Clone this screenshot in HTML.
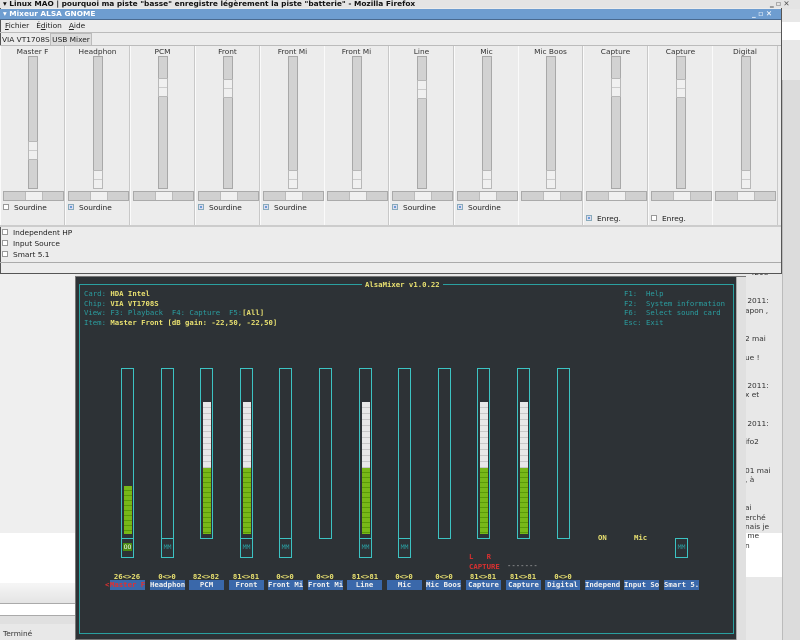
<!DOCTYPE html>
<html><head><meta charset="utf-8"><style>
*{margin:0;padding:0;box-sizing:border-box}
body{width:800px;height:640px;overflow:hidden;background:#e8e8e8;position:relative;font-family:"DejaVu Sans","Liberation Sans",sans-serif;font-size:7.4px;color:#222}
.a{position:absolute}
.strip{position:absolute;top:46px;width:65px;height:179px;border-right:1px solid #c8c8c8;border-left:1px solid #fafafa}
.lbl{position:absolute;top:1px;left:0;width:100%;text-align:center;font-size:7.4px;color:#333}
.tr{position:absolute;width:10px;height:133px;top:10px;background:#d2d2d2;border:1px solid #a8a8a8}
.th{position:absolute;left:-1px;width:10px;height:19px;background:#f0f0f0;border:1px solid #b8b8b8}
.th:after{content:"";position:absolute;left:0;right:0;top:8px;border-top:1px solid #ccc}
.bal{position:absolute;left:2px;top:145px;width:61px;height:10px;background:#d0d0d0;border:1px solid #aaa}
.bal i{position:absolute;left:21px;top:0;width:18px;height:8px;background:#f0f0f0;border-left:1px solid #bbb;border-right:1px solid #bbb}
.cb{position:absolute;left:2px;font-size:7.4px;color:#222;white-space:nowrap}
.cb b{display:inline-block;width:6px;height:6px;border:1px solid #999;background:#fff;margin-right:5px;vertical-align:-0px}
.cb b.on{background:#6a9ad8;border-color:#8ab;box-shadow:inset 0 0 0 1px #dde}
.t{position:absolute;font-family:"DejaVu Sans Mono","Liberation Mono",monospace;font-size:7.3px;line-height:9.5px;white-space:pre;font-weight:bold}
.cy{color:#2a9ea0;font-weight:normal}
.yl{color:#e8e070}
.bar{position:absolute;top:368px;width:13px;height:171px;border:1.5px solid #3cc3c3}
.mm{position:absolute;top:538px;width:13px;height:20px;border:1.5px solid #3cc3c3;color:#2a9ea0;font-family:"DejaVu Sans Mono",monospace;font-size:6.5px;text-align:center;line-height:17px}
.g{position:absolute;left:2px;width:8px;background:repeating-linear-gradient(#78b818 0 4px,#5a9a08 4px 5px)}
.w{position:absolute;left:2px;width:8px;background:repeating-linear-gradient(#e8e8e8 0 5px,#c8c8c8 5px 6px)}
.bl{position:absolute;top:580px;width:35px;height:10px;background:#3a68aa;color:#f0f0f0;font-family:"DejaVu Sans Mono",monospace;font-size:7.3px;line-height:10px;text-align:center;font-weight:bold;white-space:pre}
.vv{position:absolute;top:572px;width:40px;text-align:center;color:#e8e070;font-family:"DejaVu Sans Mono",monospace;font-size:7.3px;font-weight:bold}
</style></head><body>
<div class="a" style="left:0;top:0;width:800px;height:9px;background:#e4e4e4"></div>
<div class="a" style="left:3px;top:0;font-size:7.4px;font-weight:bold;line-height:8px;color:#111;white-space:nowrap">▾ Linux MAO | pourquoi ma piste "basse" enregistre légèrement la piste "batterie" - Mozilla Firefox</div>
<div class="a" style="left:770px;top:0;font-size:7.4px;color:#555;line-height:8px">‗ ▫ ✕</div>
<div class="a" style="left:782px;top:22px;width:18px;height:18px;background:#fff"></div>
<div class="a" style="left:782px;top:80px;width:18px;height:560px;background:#dcdcdc;border-left:1px solid #bbb"></div>
<div class="a" style="left:745px;top:533px;width:37px;height:44px;background:#fff"></div>
<div class="a" style="left:745px;top:268px;font-size:7.4px;line-height:9.4px;color:#333;white-space:pre">  4298


 2011:
apon ,


2 mai

ue !


 2011:
x et


 2011:

ifo2


01 mai
, à


ai
erché
nais je
 me
n</div>
<div class="a" style="left:0;top:274px;width:75px;height:259px;background:#efefef"></div>
<div class="a" style="left:0;top:533px;width:75px;height:50px;background:#fff"></div>
<div class="a" style="left:0;top:583px;width:75px;height:20px;background:linear-gradient(#f6f6f6,#e4e4e4)"></div>
<div class="a" style="left:0;top:603px;width:75px;height:13px;background:#fff;border-top:1px solid #aaa;border-bottom:1px solid #aaa"></div>
<div class="a" style="left:0;top:616px;width:75px;height:8px;background:#e0e0e0"></div>
<div class="a" style="left:3px;top:629px;font-size:7.4px;color:#333">Terminé</div>
<!-- mixer window -->
<div class="a" style="left:0;top:8px;width:782px;height:266px;background:#ececec;border:1px solid #555;border-top:none"></div>
<div class="a" style="left:0;top:9px;width:781px;height:11px;background:#6e9dd0;border-bottom:1px solid #4a6a90"></div>
<div class="a" style="left:3px;top:9px;font-size:7.4px;font-weight:bold;color:#fff;line-height:10px">▾ Mixeur ALSA GNOME</div>
<div class="a" style="left:752px;top:9px;font-size:7.4px;font-weight:bold;color:#fff;line-height:10px">_ ▫ ✕</div>
<div class="a" style="left:0;top:20px;width:781px;height:13px;border-bottom:1px solid #bbb"></div>
<div class="a" style="left:5px;top:21px;font-size:7.4px;line-height:10px;white-space:nowrap"><u>F</u>ichier &nbsp;&nbsp;É<u>d</u>ition &nbsp;&nbsp;<u>A</u>ide</div>
<div class="a" style="left:0;top:33px;width:781px;height:13px;border-bottom:1px solid #bbb"></div>
<div class="a" style="left:2px;top:34px;font-size:7.4px;line-height:11px;white-space:nowrap">VIA VT1708S</div>
<div class="a" style="left:50px;top:33px;width:42px;height:13px;background:#dcdcdc;border:1px solid #bbb;font-size:7.4px;line-height:11px;text-align:center;white-space:nowrap">USB Mixer</div>

<div class="strip" style="left:0"><div class="lbl">Master F</div><div class="tr" style="left:27px"><div class="th" style="top:84px"></div></div><div class="bal"><i></i></div><div class="cb" style="top:157px"><b></b>Sourdine</div></div>
<div class="strip" style="left:65px"><div class="lbl">Headphon</div><div class="tr" style="left:27px"><div class="th" style="top:113px"></div></div><div class="bal"><i></i></div><div class="cb" style="top:157px"><b class="on"></b>Sourdine</div></div>
<div class="strip" style="left:130px"><div class="lbl">PCM</div><div class="tr" style="left:27px"><div class="th" style="top:21px"></div></div><div class="bal"><i></i></div></div>
<div class="strip" style="left:195px"><div class="lbl">Front</div><div class="tr" style="left:27px"><div class="th" style="top:22px"></div></div><div class="bal"><i></i></div><div class="cb" style="top:157px"><b class="on"></b>Sourdine</div></div>
<div class="strip" style="left:260px"><div class="lbl">Front Mi</div><div class="tr" style="left:27px"><div class="th" style="top:113px"></div></div><div class="bal"><i></i></div><div class="cb" style="top:157px"><b class="on"></b>Sourdine</div></div>
<div class="strip" style="left:324px"><div class="lbl">Front Mi</div><div class="tr" style="left:27px"><div class="th" style="top:113px"></div></div><div class="bal"><i></i></div></div>
<div class="strip" style="left:389px"><div class="lbl">Line</div><div class="tr" style="left:27px"><div class="th" style="top:23px"></div></div><div class="bal"><i></i></div><div class="cb" style="top:157px"><b class="on"></b>Sourdine</div></div>
<div class="strip" style="left:454px"><div class="lbl">Mic</div><div class="tr" style="left:27px"><div class="th" style="top:113px"></div></div><div class="bal"><i></i></div><div class="cb" style="top:157px"><b class="on"></b>Sourdine</div></div>
<div class="strip" style="left:518px"><div class="lbl">Mic Boos</div><div class="tr" style="left:27px"><div class="th" style="top:113px"></div></div><div class="bal"><i></i></div></div>
<div class="strip" style="left:583px"><div class="lbl">Capture</div><div class="tr" style="left:27px"><div class="th" style="top:21px"></div></div><div class="bal"><i></i></div><div class="cb" style="top:168px"><b class="on"></b>Enreg.</div></div>
<div class="strip" style="left:648px"><div class="lbl">Capture</div><div class="tr" style="left:27px"><div class="th" style="top:22px"></div></div><div class="bal"><i></i></div><div class="cb" style="top:168px"><b></b>Enreg.</div></div>
<div class="strip" style="left:712px;width:66px"><div class="lbl">Digital</div><div class="tr" style="left:28px"><div class="th" style="top:113px"></div></div><div class="bal"><i></i></div></div>
<div class="a" style="left:0;top:225px;width:781px;border-top:2px solid #ccc"></div>
<div class="cb" style="top:228px;left:2px"><b></b>Independent HP</div>
<div class="cb" style="top:239px;left:2px"><b></b>Input Source</div>
<div class="cb" style="top:250px;left:2px"><b></b>Smart 5.1</div>
<div class="a" style="left:0;top:262px;width:781px;height:1px;background:#aaa"></div>

<!-- terminal -->
<div class="a" style="left:75px;top:276px;width:671px;height:364px;background:#2d3236;border:1px solid #777"></div>
<div class="a" style="left:736px;top:277px;width:10px;height:363px;background:#e0e0e0;border-left:1px solid #aaa"></div>
<div class="a" style="left:79px;top:284px;width:655px;height:350px;border:1px solid #2aa0a0"></div>
<div class="t yl" style="left:362px;top:280px;background:#2d3236;padding:0 3px">AlsaMixer v1.0.22</div>
<div class="t" style="left:84px;top:289px"><span class="cy">Card: </span><span class="yl">HDA Intel</span>
<span class="cy">Chip: </span><span class="yl">VIA VT1708S</span>
<span class="cy">View: F3: Playback  F4: Capture  F5:</span><span class="yl">[All]</span>
<span class="cy">Item: </span><span class="yl">Master Front [dB gain: -22,50, -22,50]</span></div>
<div class="t cy" style="left:624px;top:289px">F1:  Help
F2:  System information
F6:  Select sound card
Esc: Exit</div>

<div class="bar" style="left:121px"><div class="g" style="top:117px;height:48px"></div></div>
<div class="mm" style="left:121px"><span style="background:#4a8a10;color:#eee;padding:0 1px">OO</span></div>
<div class="bar" style="left:161px"></div><div class="mm" style="left:161px">MM</div>
<div class="bar" style="left:200px"><div class="w" style="top:33px;height:66px"></div><div class="g" style="top:99px;height:66px"></div></div>
<div class="bar" style="left:240px"><div class="w" style="top:33px;height:66px"></div><div class="g" style="top:99px;height:66px"></div></div><div class="mm" style="left:240px">MM</div>
<div class="bar" style="left:279px"></div><div class="mm" style="left:279px">MM</div>
<div class="bar" style="left:319px"></div>
<div class="bar" style="left:359px"><div class="w" style="top:33px;height:66px"></div><div class="g" style="top:99px;height:66px"></div></div><div class="mm" style="left:359px">MM</div>
<div class="bar" style="left:398px"></div><div class="mm" style="left:398px">MM</div>
<div class="bar" style="left:438px"></div>
<div class="bar" style="left:477px"><div class="w" style="top:33px;height:66px"></div><div class="g" style="top:99px;height:66px"></div></div>
<div class="bar" style="left:517px"><div class="w" style="top:33px;height:66px"></div><div class="g" style="top:99px;height:66px"></div></div>
<div class="bar" style="left:557px"></div>
<div class="mm" style="left:675px">MM</div>
<div class="t yl" style="left:598px;top:533px">ON</div>
<div class="t yl" style="left:634px;top:533px">Mic</div>
<div class="t" style="left:469px;top:552px;color:#d83030">L   R
CAPTURE</div>
<div class="t" style="left:507px;top:561px;color:#bbb;font-weight:normal">-------</div>

<div class="vv" style="left:107px">26<>26</div>
<div class="vv" style="left:147px">0<>0</div>
<div class="vv" style="left:186px">82<>82</div>
<div class="vv" style="left:226px">81<>81</div>
<div class="vv" style="left:265px">0<>0</div>
<div class="vv" style="left:305px">0<>0</div>
<div class="vv" style="left:345px">81<>81</div>
<div class="vv" style="left:384px">0<>0</div>
<div class="vv" style="left:424px">0<>0</div>
<div class="vv" style="left:463px">81<>81</div>
<div class="vv" style="left:503px">81<>81</div>
<div class="vv" style="left:543px">0<>0</div>

<div class="bl" style="left:110px;color:#e03030">Master F</div>
<div class="t" style="left:105px;top:580px;color:#e03030;line-height:10px">&lt;          &gt;</div>
<div class="bl" style="left:150px">Headphon</div>
<div class="bl" style="left:189px">PCM</div>
<div class="bl" style="left:229px">Front</div>
<div class="bl" style="left:268px">Front Mi</div>
<div class="bl" style="left:308px">Front Mi</div>
<div class="bl" style="left:347px">Line</div>
<div class="bl" style="left:387px">Mic</div>
<div class="bl" style="left:426px">Mic Boos</div>
<div class="bl" style="left:466px">Capture</div>
<div class="bl" style="left:506px">Capture</div>
<div class="bl" style="left:545px">Digital</div>
<div class="bl" style="left:585px">Independ</div>
<div class="bl" style="left:624px">Input So</div>
<div class="bl" style="left:664px">Smart 5.</div>
</body></html>
